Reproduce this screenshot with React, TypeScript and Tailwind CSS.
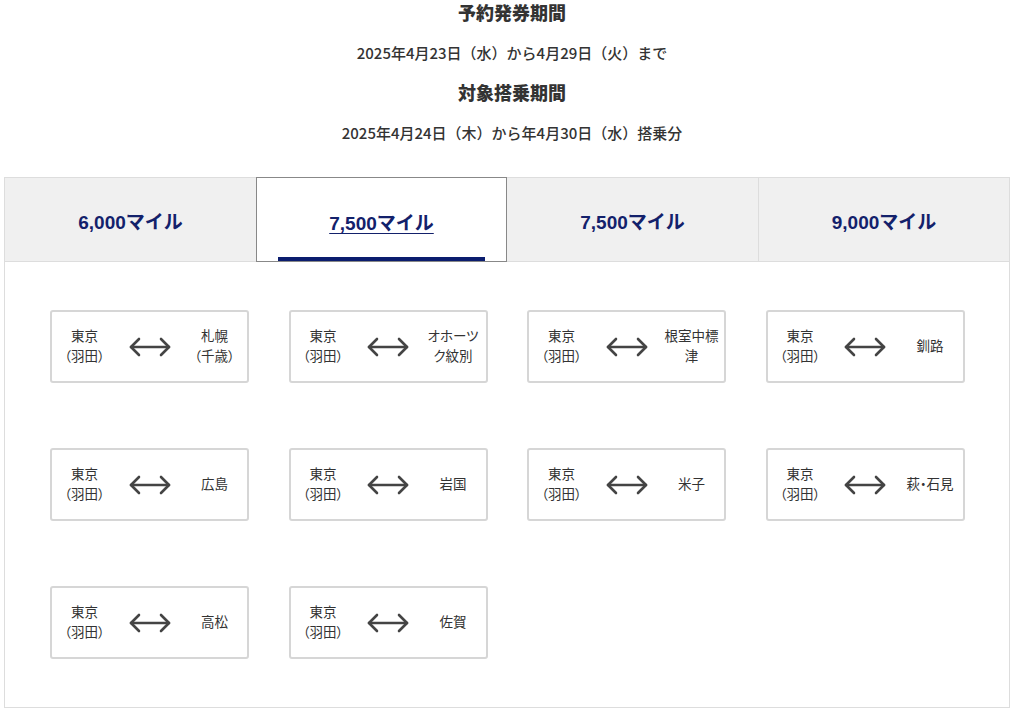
import React from 'react';

const font = "font-['Liberation_Sans','Noto_Sans_CJK_JP',sans-serif]";
const jp = "font-['Noto_Sans_CJK_JP',sans-serif]";

const tabs = [
  { label: '6,000マイル', active: false },
  { label: '7,500マイル', active: true },
  { label: '7,500マイル', active: false },
  { label: '9,000マイル', active: false },
];

const routes = ['札幌\n（千歳）', 'オホーツク紋別', '根室中標津', '釧路', '広島', '岩国', '米子', '萩・石見', '高松', '佐賀'];

function Arrow() {
  return (
    <svg width="44" height="22" viewBox="0 0 44 22" fill="none" stroke="#444" strokeWidth="2.6" strokeLinecap="round" strokeLinejoin="round">
      <path d="M3 11 H41" />
      <path d="M11 3 L3 11 L11 19" />
      <path d="M33 3 L41 11 L33 19" />
    </svg>
  );
}

function RouteCard({ to }: { to: string }) {
  return (
    <div className={`${jp} h-[73px] w-[199px] border-2 border-[#d6d6d6] rounded-[3px] bg-white grid grid-cols-3 items-center pb-[3px] text-[13.5px] leading-[20px] text-[#333] [font-feature-settings:'palt']`}>
      <div className="text-center">
        東京
        <br />
        （羽田）
      </div>
      <div className="flex justify-center pt-[3px]">
        <Arrow />
      </div>
      <div className="text-center px-[2px] whitespace-pre-line">{to}</div>
    </div>
  );
}

export default function App() {
  return (
    <div className={`${font} bg-white min-h-[717px] text-[#333]`}>
      <div className={`${jp} text-center`}>
        <h2 className="text-[18px] leading-[24px] font-black">予約発券期間</h2>
        <p className="mt-[18px] text-[15px] leading-[22px] font-medium">2025年4月23日（水）から4月29日（火）まで</p>
        <h2 className="mt-[16px] text-[18px] leading-[24px] font-black">対象搭乗期間</h2>
        <p className="mt-[18px] text-[15px] leading-[22px] font-medium">2025年4月24日（木）から年4月30日（水）搭乗分</p>
      </div>

      <div className="mt-[33px] ml-[4px] w-[1006px] border border-[#dddddd]">
        <div className="grid grid-cols-4 h-[84px] bg-[#f0f0f0] border-b border-[#dddddd]">
          {tabs.map((t, i) => (
            <div
              key={i}
              className={
                t.active
                  ? 'relative -mt-px -mb-px bg-white border border-[#888] flex items-center justify-center pt-[10px]'
                  : 'relative flex items-center justify-center pt-[8px] ' + (i === 3 ? 'border-l border-[#dddddd]' : '')
              }
            >
              <span className={'text-[19px] font-bold text-[#13216b] ' + (t.active ? 'underline underline-offset-[3px] decoration-1' : '')}>
                {t.label}
              </span>
              {t.active && <div className="absolute left-[21px] right-[21px] bottom-0 h-[4px] bg-[#0b1d6e]" />}
            </div>
          ))}
        </div>
        <div className="px-[45px] pt-[48px] pb-[48px] grid grid-cols-4 gap-x-[40px] gap-y-[65px]">
          {routes.map((r, i) => (
            <RouteCard key={i} to={r} />
          ))}
        </div>
      </div>
    </div>
  );
}
